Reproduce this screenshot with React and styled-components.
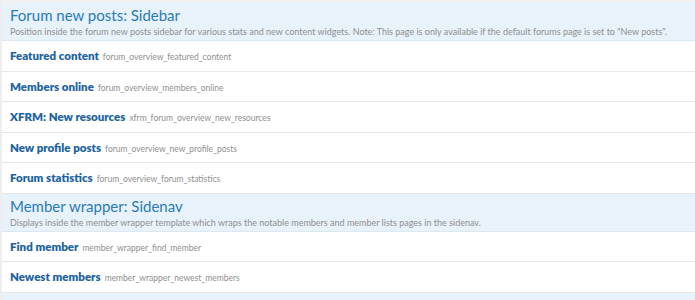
import React from 'react'
import styled, { createGlobalStyle } from 'styled-components'

const GlobalStyle = createGlobalStyle`
  html, body {
    margin: 0;
    padding: 0;
    background: #fff;
  }
  body {
    font-family: Lato, "Open Sans", "Liberation Sans", sans-serif;
  }
`

const Container = styled.div`
  width: 100%;
  border-top: 3px solid #f1f1f1;
  border-left: 2px solid #eeeeee;
  box-sizing: border-box;
  min-height: 300px;
  background: #e7f2fb;
`

const SectionHeader = styled.div`
  background: #e7f2fb;
  padding: 3px 8px 2px;
  border-bottom: 1px solid #dde7ef;
`

const SectionTitle = styled.h3`
  margin: 0;
  font-size: 15px;
  font-weight: 400;
  line-height: 19px;
  color: #2a7bb8;
`

const SectionDesc = styled.div`
  font-size: 9px;
  line-height: 13px;
  color: #8f8f8f;
  white-space: nowrap;
`

const Row = styled.div`
  display: flex;
  align-items: baseline;
  gap: 4px;
  height: 29.5px;
  line-height: 29.5px;
  padding: 0 8px;
  background: #fff;
  border-bottom: 1px solid #e7e7e7;
  white-space: nowrap;
`

const RowTitle = styled.span`
  font-size: 11.5px;
  font-weight: 800;
  color: #1d64a0;
`

const RowCode = styled.span`
  font-size: 8.5px;
  color: #8f8f8f;
`

const sections = [
  {
    title: 'Forum new posts: Sidebar',
    desc: 'Position inside the forum new posts sidebar for various stats and new content widgets. Note: This page is only available if the default forums page is set to "New posts".',
    rows: [
      ['Featured content', 'forum_overview_featured_content'],
      ['Members online', 'forum_overview_members_online'],
      ['XFRM: New resources', 'xfrm_forum_overview_new_resources'],
      ['New profile posts', 'forum_overview_new_profile_posts'],
      ['Forum statistics', 'forum_overview_forum_statistics'],
    ],
  },
  {
    title: 'Member wrapper: Sidenav',
    desc: 'Displays inside the member wrapper template which wraps the notable members and member lists pages in the sidenav.',
    rows: [
      ['Find member', 'member_wrapper_find_member'],
      ['Newest members', 'member_wrapper_newest_members'],
    ],
  },
]

export default function App() {
  return (
    <>
      <GlobalStyle />
      <Container>
        {sections.map((s) => (
          <div key={s.title}>
            <SectionHeader>
              <SectionTitle>{s.title}</SectionTitle>
              <SectionDesc>{s.desc}</SectionDesc>
            </SectionHeader>
            {s.rows.map(([t, c]) => (
              <Row key={c}>
                <RowTitle>{t}</RowTitle>
                <RowCode>{c}</RowCode>
              </Row>
            ))}
          </div>
        ))}
      </Container>
    </>
  )
}
